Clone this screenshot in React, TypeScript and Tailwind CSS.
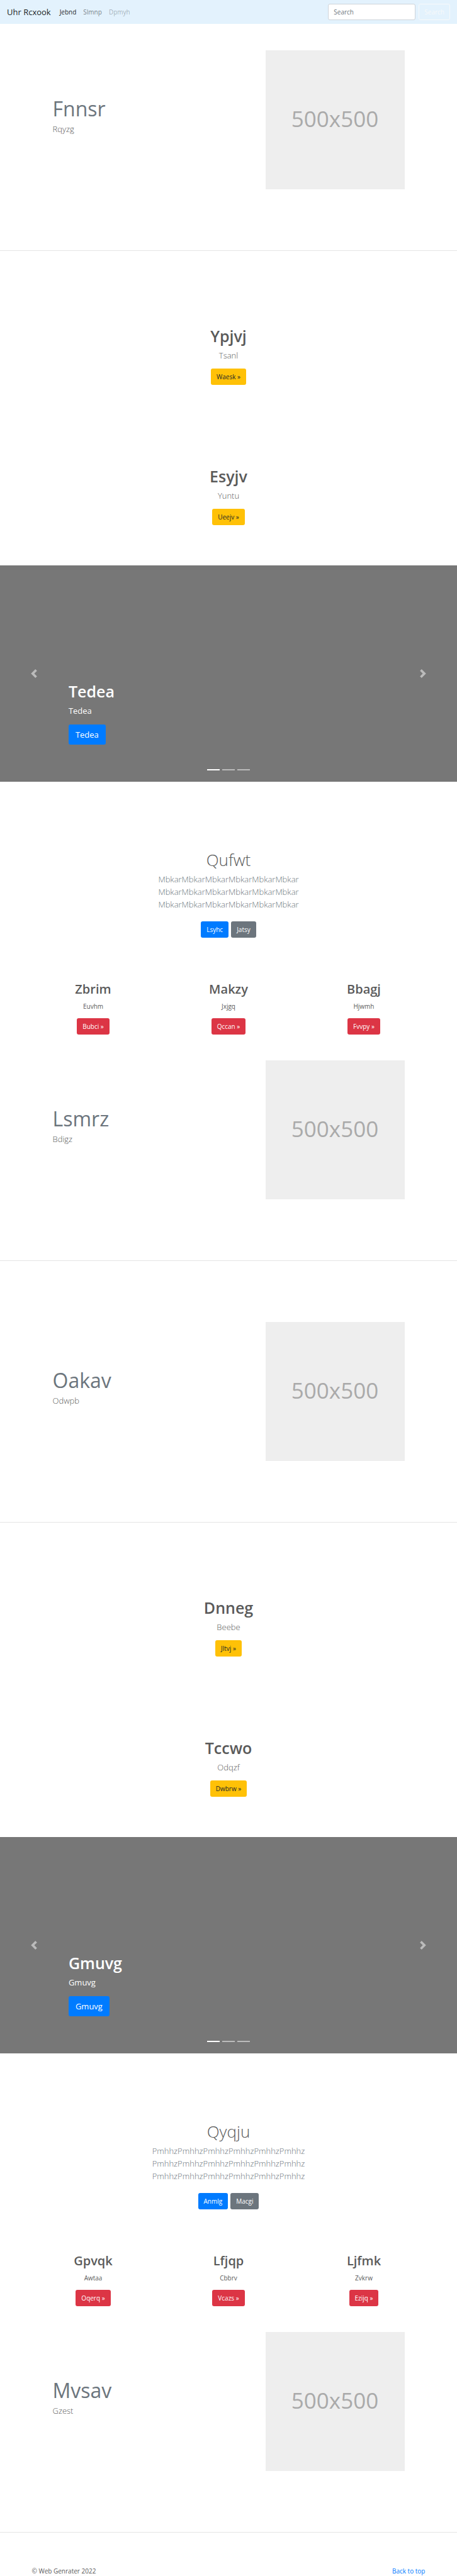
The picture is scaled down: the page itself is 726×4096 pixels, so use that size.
import React from "react";

type Item = { title: string; text: string; action: string };

const fontStack = "font-['Open_Sans','Noto_Sans',sans-serif]";

function Navbar() {
  return (
    <nav className="flex h-[38px] items-center bg-[#e3f2fd] px-[11px]">
      <a href="#top" className="mr-[14px] text-[13px] leading-5 text-black/90">
        Uhr Rcxook
      </a>
      <div className="flex grow gap-[11px] text-[10px] leading-4">
        <a href="#jebnd" className="text-black/90">Jebnd</a>
        <a href="#slmnp" className="text-black/50">Slmnp</a>
        <a href="#dpmyh" className="text-black/30">Dpmyh</a>
      </div>
      <form className="flex gap-[5px]" onSubmit={(e) => e.preventDefault()}>
        <input
          type="search"
          aria-label="Search"
          placeholder="Search"
          className="h-[26px] w-[139px] rounded-[3px] border border-[#ced4da] bg-white px-2 text-[10px] text-[#495057] placeholder:text-[#6c757d]"
        />
        <button
          type="submit"
          className="h-[26px] rounded-[3px] border border-[#f8f9fa] px-2 text-[10px] text-[#f8f9fa]"
        >
          Search
        </button>
      </form>
    </nav>
  );
}

function Feature({ title, text }: { title: string; text: string }) {
  return (
    <section className="border-b border-black/10 pb-[97px]">
      <div className="mx-auto flex w-full max-w-[645px] items-start justify-between px-[43px]">
        <div className="pt-[73px]">
          <h2 className="text-[32px] leading-10 text-[#6c757d]">{title}</h2>
          <p className="mt-[2px] text-[13px] leading-5 font-light">{text}</p>
        </div>
        <div
          role="img"
          aria-label="500x500"
          className="flex aspect-square w-[221px] shrink-0 items-center justify-center bg-[#eeeeee] pb-1 text-[35px] leading-10 text-[#aaaaaa]"
        >
          500x500
        </div>
      </div>
    </section>
  );
}

function Promo({ title, text, action }: Item) {
  return (
    <div className="flex flex-col items-center pt-[65px] pb-16">
      <h2 className="text-[25px] leading-8 font-semibold">{title}</h2>
      <p className="mt-[5px] text-[13px] leading-5 font-light">{text}</p>
      <a
        href="#promo"
        className="mt-[11px] rounded-[3px] bg-[#ffc107] px-[9px] py-[5px] text-[10px] leading-4 text-[#212529]"
      >
        {action} »
      </a>
    </div>
  );
}

function Carousel({ label }: { label: string }) {
  return (
    <section className="relative flex h-[344px] flex-col justify-end bg-[#777777] px-[15%] pb-[59px] text-white">
      <h1 className="text-[25px] leading-8 font-semibold">{label}</h1>
      <p className="mt-[5px] text-[13px] leading-5">{label}</p>
      <a
        href="#carousel"
        className="mt-[12px] self-start rounded-[3px] bg-[#007bff] px-[11px] py-[6px] text-[13px] leading-5"
      >
        {label}
      </a>
      <button
        type="button"
        aria-label="Previous"
        className="absolute inset-y-0 left-0 flex w-[15%] items-center justify-center opacity-50"
      >
        <svg viewBox="0 0 8 8" className="size-[14px]" fill="#fff">
          <path d="M5.25 0l-4 4 4 4 1.5-1.5-2.5-2.5 2.5-2.5-1.5-1.5z" />
        </svg>
      </button>
      <button
        type="button"
        aria-label="Next"
        className="absolute inset-y-0 right-0 flex w-[15%] items-center justify-center opacity-50"
      >
        <svg viewBox="0 0 8 8" className="size-[14px]" fill="#fff">
          <path d="M2.75 0l-1.5 1.5 2.5 2.5-2.5 2.5 1.5 1.5 4-4-4-4z" />
        </svg>
      </button>
      <div className="absolute inset-x-0 bottom-[18px] flex justify-center gap-1">
        <span className="h-[2px] w-5 bg-white" />
        <span className="h-[2px] w-5 bg-white/50" />
        <span className="h-[2px] w-5 bg-white/50" />
      </div>
    </section>
  );
}

function Intro({ title, word, primary, secondary }: { title: string; word: string; primary: string; secondary: string }) {
  const line = word.repeat(6);
  return (
    <section className="flex flex-col items-center pt-[108px] text-center">
      <h1 className="text-[26px] leading-8 font-light">{title}</h1>
      <p className="mt-[5px] text-[13px] leading-5 font-light text-[#6c757d]">
        {line}
        <br />
        {line}
        <br />
        {line}
      </p>
      <div className="mt-[17px] flex gap-[4px] text-[10px] leading-4 text-white">
        <a href="#primary" className="rounded-[3px] bg-[#007bff] px-[9px] py-[5px]">{primary}</a>
        <a href="#secondary" className="rounded-[3px] bg-[#6c757d] px-[9px] py-[5px]">{secondary}</a>
      </div>
    </section>
  );
}

function Columns({ items }: { items: Item[] }) {
  return (
    <section className="mx-auto grid w-full max-w-[645px] grid-cols-3 pt-[69px] pb-[41px]">
      {items.map((item) => (
        <div key={item.title} className="flex flex-col items-center">
          <h2 className="text-[20px] leading-[26px] font-semibold">{item.title}</h2>
          <p className="mt-[6px] text-[10px] leading-4">{item.text}</p>
          <a
            href="#details"
            className="mt-[11px] rounded-[3px] bg-[#dc3545] px-[9px] py-[5px] text-[10px] leading-4 text-white"
          >
            {item.action} »
          </a>
        </div>
      ))}
    </section>
  );
}

export default function App() {
  return (
    <div id="top" className={`${fontStack} bg-white text-[#5a5a5a]`}>
      <Navbar />
      <main>
        <div className="pt-[42px]">
          <Feature title="Fnnsr" text="Rqyzg" />
        </div>
        <div className="pt-[54px]">
          <Promo title="Ypjvj" text="Tsanl" action="Waesk" />
          <Promo title="Esyjv" text="Yuntu" action="Ueejv" />
        </div>
        <Carousel label="Tedea" />
        <Intro title="Qufwt" word="Mbkar" primary="Lsyhc" secondary="Jatsy" />
        <Columns
          items={[
            { title: "Zbrim", text: "Euvhm", action: "Bubci" },
            { title: "Makzy", text: "Jxjgq", action: "Qccan" },
            { title: "Bbagj", text: "Hjwmh", action: "Fvvpy" },
          ]}
        />
        <Feature title="Lsmrz" text="Bdigz" />
        <div className="pt-[97px]">
          <Feature title="Oakav" text="Odwpb" />
        </div>
        <div className="pt-[54px]">
          <Promo title="Dnneg" text="Beebe" action="Jltvj" />
          <Promo title="Tccwo" text="Odqzf" action="Dwbrw" />
        </div>
        <Carousel label="Gmuvg" />
        <Intro title="Qyqju" word="Pmhhz" primary="Anmlg" secondary="Macgi" />
        <Columns
          items={[
            { title: "Gpvqk", text: "Awtaa", action: "Oqerq" },
            { title: "Lfjqp", text: "Cbbrv", action: "Vcazs" },
            { title: "Ljfmk", text: "Zvkrw", action: "Ezijq" },
          ]}
        />
        <Feature title="Mvsav" text="Gzest" />
      </main>
      <footer className="mx-auto flex w-full max-w-[645px] justify-between px-[10px] pt-[53px] text-[10px] leading-4">
        <p>© Web Genrater 2022</p>
        <a href="#top" className="text-[#007bff]">Back to top</a>
      </footer>
    </div>
  );
}
